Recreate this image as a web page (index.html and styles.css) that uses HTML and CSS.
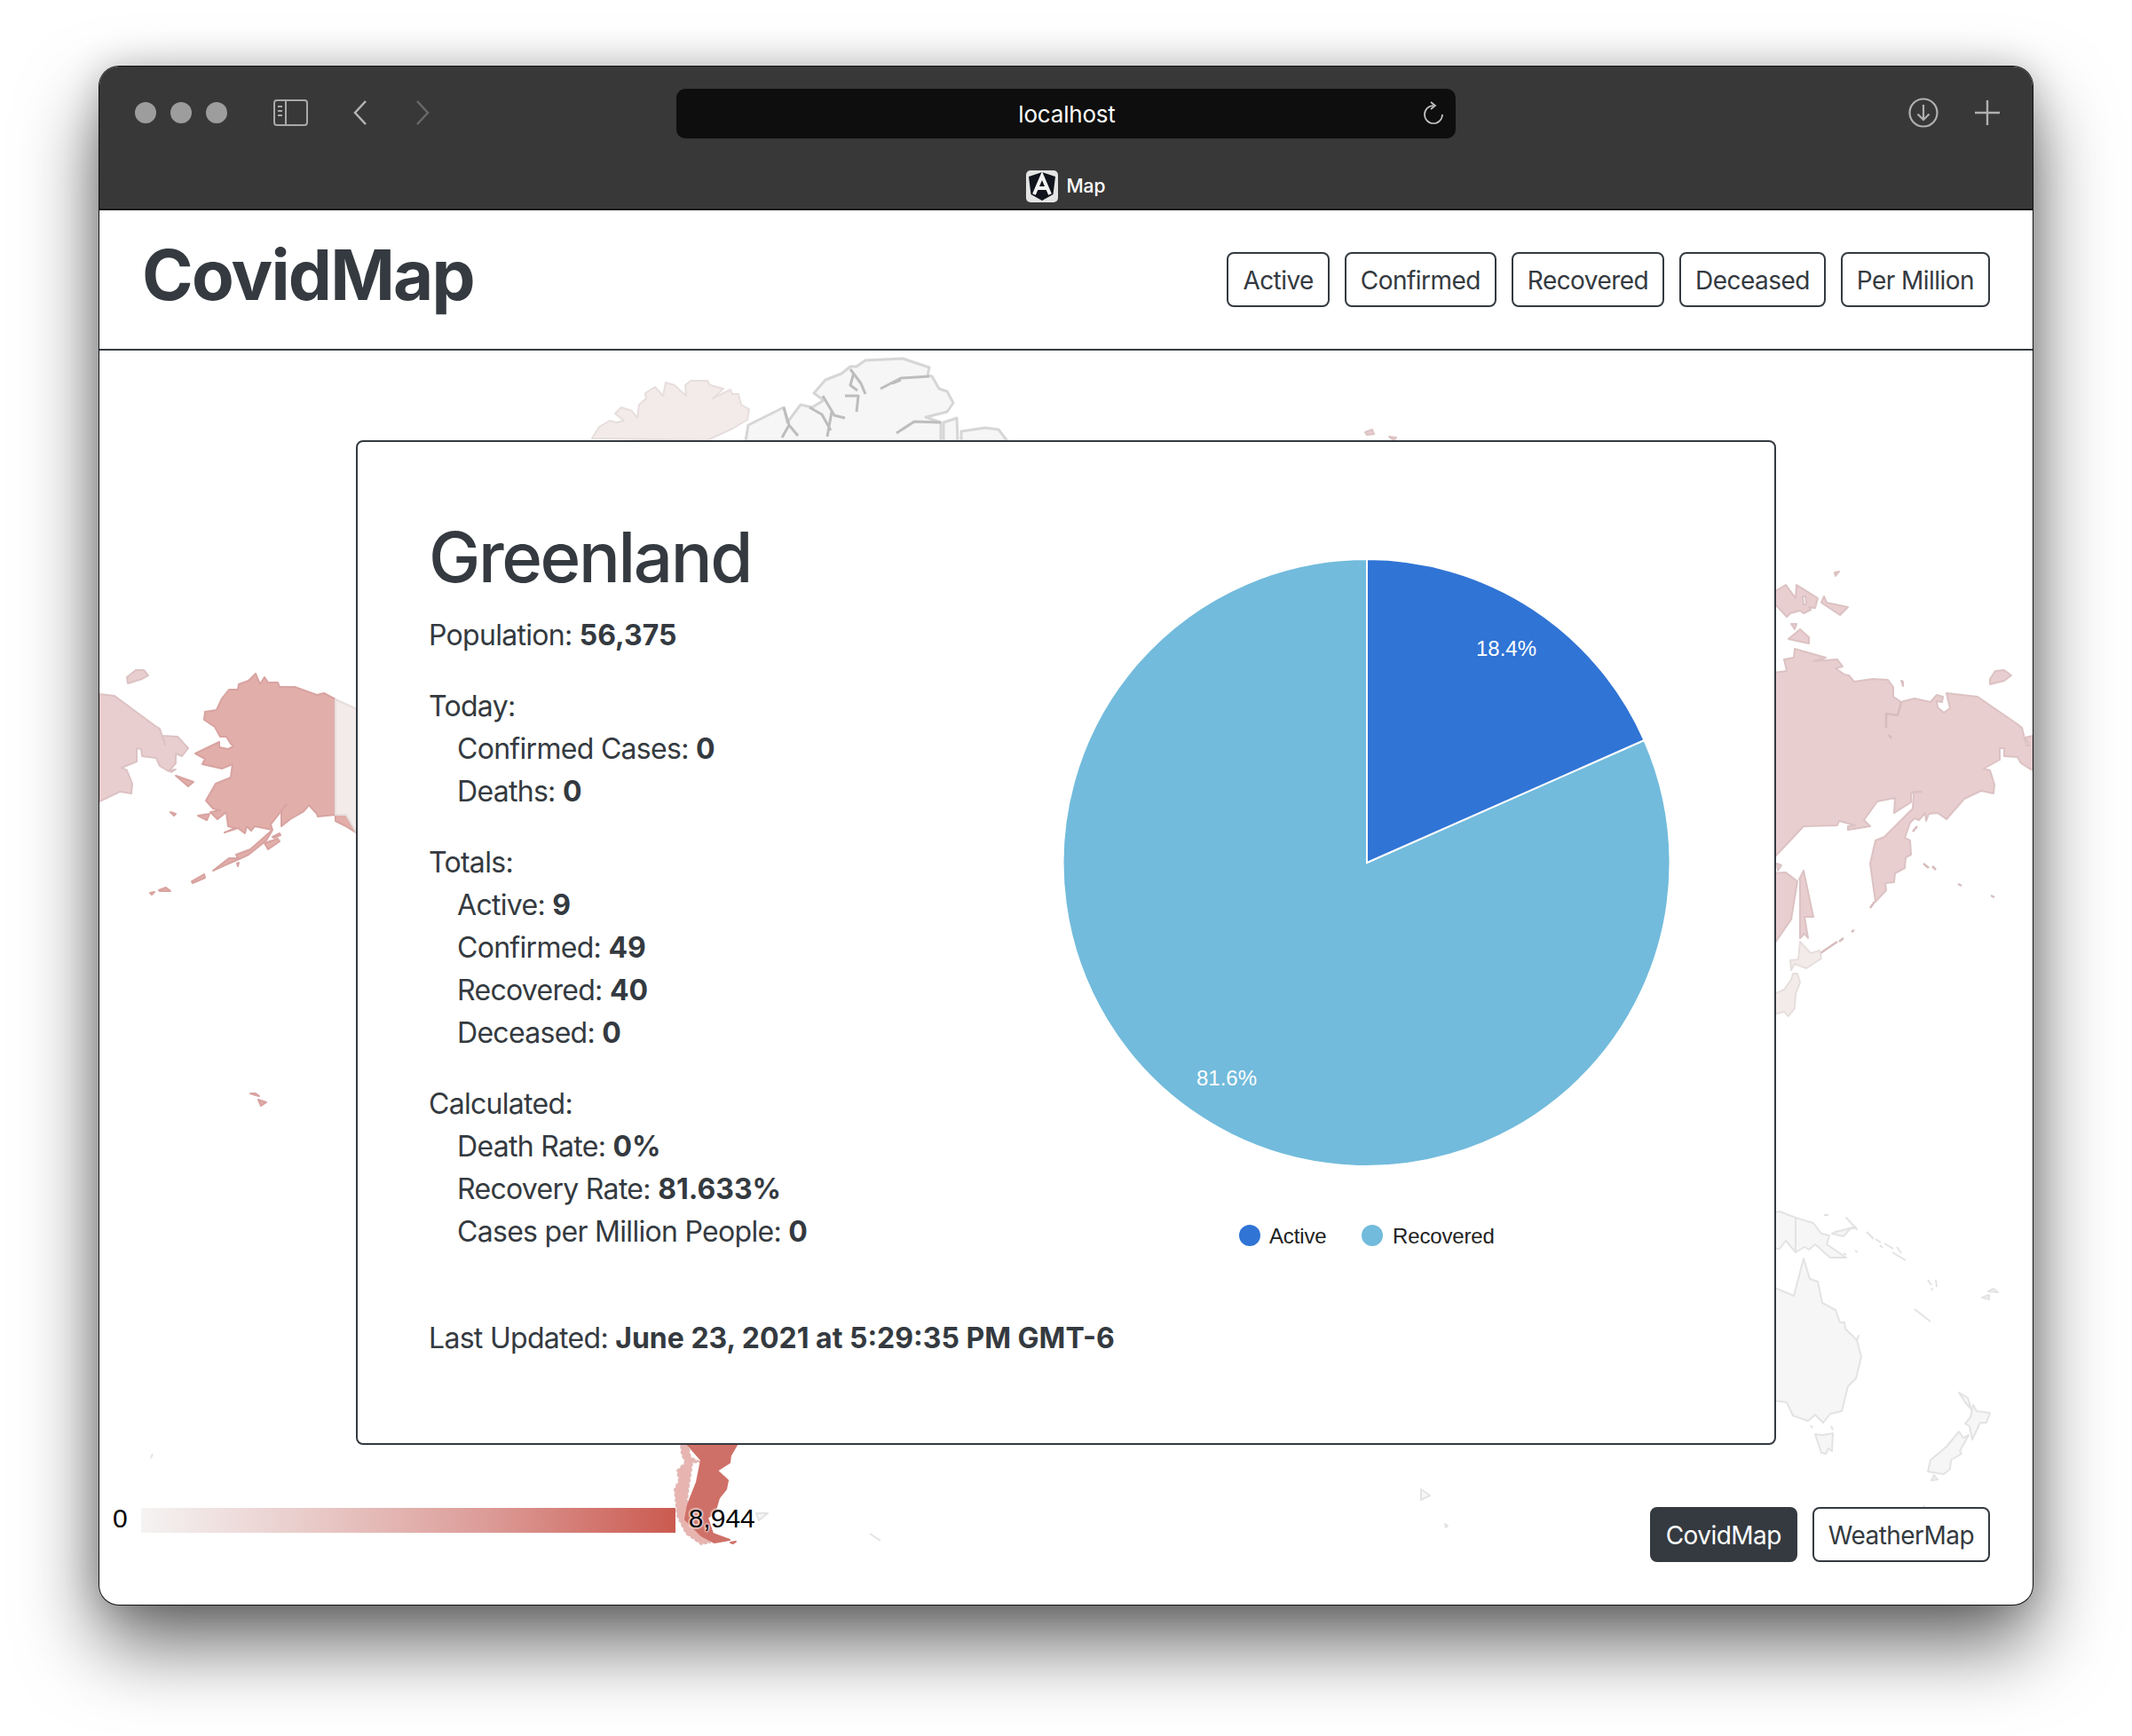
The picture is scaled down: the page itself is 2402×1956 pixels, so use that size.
FILE: index.html
```html
<!DOCTYPE html>
<html>
    <head>
        <title>Map</title>
        <link rel="stylesheet" href="styles.css">
    </head>
    <body>
        <div class="window">
            <div class="toolbar">
                <div class="toolbar-top">
                    <div class="toolbar-left">
                        <span class="light"></span><span class="light"></span><span class="light"></span>
                        <svg class="ico-sidebar" width="39" height="30" viewBox="0 0 39 30">
                            <rect x="1" y="1" width="37" height="28" rx="3" fill="none" stroke="#a9a9a9" stroke-width="2"/>
                            <path d="M14 1v28" stroke="#a9a9a9" stroke-width="2"/>
                            <path d="M5 8h5M5 13h5M5 18h5" stroke="#a9a9a9" stroke-width="2"/>
                        </svg>
                        <svg class="ico-back" width="17" height="30" viewBox="0 0 17 30">
                            <path d="M15 2 3 15l12 13" fill="none" stroke="#b4b4b4" stroke-width="2.5"/>
                        </svg>
                        <svg class="ico-forward" width="17" height="30" viewBox="0 0 17 30">
                            <path d="M2 2l12 13L2 28" fill="none" stroke="#686868" stroke-width="2.5"/>
                        </svg>
                    </div>
                    <div class="urlbar">
                        <span class="url">localhost</span>
                        <svg class="ico-reload" width="24" height="26" viewBox="0 0 24 26">
                            <path d="M12 5A10 10 0 1 0 22 15" fill="none" stroke="#c4c4c4" stroke-width="1.7"/>
                            <path d="M9 1l5 4-5 4" fill="none" stroke="#c4c4c4" stroke-width="1.7"/>
                        </svg>
                    </div>
                    <div class="toolbar-right">
                        <svg width="34" height="34" viewBox="0 0 34 34">
                            <circle cx="17" cy="17" r="15.5" fill="none" stroke="#b0b0b0" stroke-width="2.2"/>
                            <path d="M17 8v17M10.5 18.5 17 25l6.5-6.5" fill="none" stroke="#b0b0b0" stroke-width="2.2"/>
                        </svg>
                        <svg width="28" height="28" viewBox="0 0 28 28">
                            <path d="M14 0v28M0 14h28" stroke="#b0b0b0" stroke-width="2.4"/>
                        </svg>
                    </div>
                </div>
                <div class="tab">
                    <svg width="36" height="36" viewBox="0 0 36 36">
                        <rect width="36" height="36" rx="5" fill="#e4e4e4"/>
                        <path d="M18 2 3 7l2.5 20L18 34l12.5-7L33 7z" fill="#11141d"/>
                        <path d="M9 27 18 6l9 21M12.5 20h11" fill="none" stroke="#f2f2f2" stroke-width="4"/>
                    </svg>
                    <span>Map</span>
                </div>
            </div>

            <div class="header">
                <h1 class="brand">CovidMap</h1>
                <div class="btn-row">
                    <a class="btn">Active</a>
                    <a class="btn">Confirmed</a>
                    <a class="btn">Recovered</a>
                    <a class="btn">Deceased</a>
                    <a class="btn">Per Million</a>
                </div>
            </div>

            <div class="stage">
                <svg class="map" viewBox="112 395 2178 1413">
                    <!-- far east russia, wraps to the left edge -->
                    <g class="ru">
                        <polygon points="112,782 129,784 175,818 180,821 186,839 183,829 200,830 212,843 205,852 198,849 198,860 190,869 180,863 176,854 160,852 159,844 154,843 154,858 137,865 143,868 149,883 148,894 135,892 112,903"/>
                        <polygon points="143,763 153,755 162,755 167,761 160,765 144,770"/>
                        <polygon points="191,868 198,867 193,870"/>
                        <polygon points="1990,759 2013,756 2010,743 2021,741 2022,731 2057,741 2043,745 2070,743 2076,751 2068,753 2078,760 2083,761 2089,768 2110,765 2127,766 2133,774 2133,785 2142,791 2145,790 2157,787 2175,791 2182,783 2189,785 2188,791 2182,790 2183,797 2190,803 2197,798 2193,781 2228,785 2273,816 2278,820 2283,840 2286,840 2282,831 2290,829 2290,868 2277,860 2273,853 2258,852 2258,843 2253,843 2253,856 2235,866 2242,868 2247,884 2246,894 2232,891 2213,900 2193,923 2183,916 2173,917 2170,925 2169,916 2162,924 2157,922 2152,927 2146,944 2152,947 2153,963 2147,966 2146,978 2135,984 2134,994 2124,995 2125,1003 2113,1016 2107,973 2113,947 2123,943 2155,911 2156,892 2165,892 2153,894 2153,904 2134,916 2135,899 2115,903 2100,924 2107,931 2082,935 2082,931 2090,930 2072,925 2070,930 2032,931 2000,965 1990,965"/>
                        <polyline class="thin" points="2142,791 2138,806 2125,804 2125,820"/>
                        <polygon points="2000,666 2012,659 2023,674 2024,659 2048,674 2045,685 2038,684 2040,687 2032,691 2028,688 2017,691 2013,695 2003,684 2000,681"/>
                        <polygon class="hole" points="2031,672 2034,672 2035,681 2032,681"/>
                        <polygon points="2052,679 2055,672 2058,679 2082,684 2073,693"/>
                        <polygon points="2018,703 2024,703 2022,709"/>
                        <polygon points="2015,720 2028,709 2038,718 2038,725"/>
                        <polygon points="2067,645 2072,644 2068,649"/>
                        <polygon points="2242,765 2248,756 2258,755 2266,761 2258,767 2242,771"/>
                        <polygon points="2142,767 2144,768 2144,773"/>
                        <path class="thin" d="M2155 937l5-6M2167 973l6 5M2177 976l4 4M2206 996l4 2M2243 1009l4 2M2107 1023l5-7M2086 1050l3-2M2072 1061l5-4M2048 1076l22-15M2128 828l3 4"/>
                        <polygon points="1990,984 2012,983 2025,993 2018,1036 2000,1062 1990,1062"/>
                        <polygon points="2027,991 2032,981 2043,1033 2033,1033 2037,1057 2033,1052 2028,1057 2028,991"/>
                        <polygon points="2002,973 2007,975 2003,981"/>
                        <polygon points="1538,487 1546,484 1548,489 1540,490"/>
                        <polygon points="1565,492 1573,493 1570,496"/>
                    </g>

                    <!-- alaska -->
                    <g class="ak">
                        <polygon points="378,788 365,781 357,783 332,774 315,774 313,769 302,769 298,763 293,771 288,759 280,767 269,771 268,777 258,777 250,787 244,800 231,802 230,811 242,819 248,830 255,830 260,838 263,841 257,844 247,842 247,836 220,849 231,855 228,861 250,866 262,861 260,876 243,883 232,902 240,911 248,913 237,915 245,923 255,915 257,931 265,933 253,938 268,933 276,939 278,931 283,936 287,931 307,935 282,957 266,963 268,967 258,967 240,981 253,975 267,969 280,963 300,947 307,935 305,929 323,906 317,913 317,931 327,923 341,915 345,911 348,907 357,917 358,920 378,918 390,918 401,938 388,930 378,925"/>
                        <polygon points="298,950 313,945 315,948 302,957"/>
                        <polygon points="307,943 315,939 316,941 309,944"/>
                        <polygon points="198,874 218,881 212,886"/>
                        <polygon points="223,919 236,917 233,924"/>
                        <polygon points="192,915 198,917 196,919"/>
                        <polygon points="216,993 230,985 231,989 217,995"/>
                        <polygon points="179,1003 187,1000 192,1004 180,1004"/>
                        <polygon points="169,1006 174,1005 171,1008"/>
                        <polygon points="267,973 269,972 268,976"/>
                        <polygon points="282,1232 288,1232 292,1235 288,1234"/>
                        <polygon points="291,1239 300,1242 294,1246"/>
                    </g>

                    <!-- pale countries -->
                    <g class="pale">
                        <polygon points="378,788 402,799 402,939 390,918 378,918"/>
                        <polygon points="667,494 675,481 687,474 695,476 703,474 693,466 700,459 712,463 718,471 720,456 728,449 727,443 738,436 747,446 750,431 760,434 773,446 772,434 778,429 797,429 800,434 815,438 803,449 823,439 825,444 832,444 835,456 844,461 842,473 825,483 797,496"/>
                        <polygon points="2028,1061 2040,1074 2050,1071 2052,1080 2035,1091 2022,1086 2018,1093 2017,1082 2026,1081"/>
                        <polygon points="2020,1097 2025,1097 2028,1107 2023,1120 2022,1136 2015,1145 2010,1140 1990,1145 1990,1124 2010,1115 2018,1104"/>
                    </g>

                    <!-- no data -->
                    <g class="nodata">
                        <polygon class="arctic" points="840,497 843,479 883,459 887,476 902,456 915,459 928,451 917,443 930,428 948,421 958,413 965,413 975,406 1017,404 1047,414 1045,423 1050,424 1058,438 1067,441 1074,454 1067,464 1043,470 1060,476 1060,497"/>
                        <path class="dark" d="M883 459l6 20 10 12M889 479l-8 14M912 459l14 8 10 18M937 464l-5 28M927 446l13 22 12 3M952 446h15l-2 18M958 416l12 16 5 12M962 420l-4 14 8 6M992 438l23-12 32-2M1010 488l20-13 30 1M1005 432l10-4"/>
                        <polygon class="arctic" points="1063,476 1078,471 1079,497 1063,497"/>
                        <polygon class="arctic" points="1083,486 1110,482 1125,484 1135,497 1083,497"/>
                        <polygon points="1990,1368 2005,1365 2023,1372 2043,1378 2052,1390 2061,1392 2058,1402 2080,1417 2062,1417 2045,1402 2038,1408 2033,1405 2023,1411 2012,1398 2005,1407 1990,1407"/>
                        <path d="M2023 1372v39"/>
                        <polygon points="2064,1390 2077,1393 2085,1384 2091,1384 2080,1372 2092,1385 2090,1382 2077,1386 2068,1388"/>
                        <path d="M2103 1388l8 8M2113 1396l6 4M2118 1403l3 3M2123 1401l10 6M2132 1411l15 9M2137 1405l5 7M2055 1369h5M2077 1412l3 2M2090 1409l3 2M2172 1442l4 6M2181 1442l1 8M2176 1451l1 3M2157 1475l18 14M2040 1606l2 3M2063 1607l2 4"/>
                        <polygon points="2240,1455 2246,1452 2251,1456"/>
                        <polygon points="2233,1462 2241,1459 2241,1464"/>
                        <polygon points="1990,1447 2021,1460 2032,1418 2039,1441 2048,1444 2053,1468 2068,1476 2073,1490 2078,1490 2079,1497 2092,1510 2094,1505 2092,1510 2097,1529 2091,1553 2082,1562 2075,1590 2062,1593 2054,1603 2045,1594 2037,1601 2020,1595 2013,1580 1990,1577"/>
                        <polygon points="2045,1616 2053,1617 2065,1615 2064,1635 2060,1632 2057,1638 2052,1637"/>
                        <polygon points="2207,1569 2217,1575 2221,1588 2214,1580"/>
                        <polygon points="2223,1583 2227,1590 2242,1592 2238,1603 2231,1603 2222,1622 2219,1607 2214,1604 2220,1597"/>
                        <polygon points="2207,1613 2212,1620 2218,1617 2208,1635 2210,1638 2198,1645 2197,1655 2190,1661 2172,1658 2175,1645 2193,1630"/>
                        <polygon points="2179,1662 2183,1667 2176,1668"/>
                        <polygon points="1601,1678 1611,1685 1601,1690"/>
                        <polygon points="1628,1717 1631,1719 1629,1721"/>
                        <polygon points="852,1705 865,1705 855,1713"/>
                        <path d="M980 1728l12 8M172 1638l-2 5M2168 1696l-1 3"/>
                    </g>

                    <!-- south america tip -->
                    <polygon class="chile" points="767,1628 775,1628 778,1642 788,1647 780,1648 775,1682 773,1702 800,1738 790,1740 773,1728 763,1708 760,1678 765,1668 763,1657 772,1648 768,1638"/>
                    <polygon class="argentina" points="775,1628 830,1628 823,1640 822,1648 808,1657 820,1668 818,1678 810,1688 805,1705 797,1710 803,1728 822,1735 805,1738 790,1730 772,1712 775,1695 785,1670 790,1645"/>
                    <polygon class="argentina" points="823,1738 829,1737 826,1739"/>
                </svg>

                <div class="card">
                    <div class="stats">
                        <h1 class="country">Greenland</h1>
                        <p class="group">Population: <strong>56,375</strong></p>
                        <div class="group">
                            <p>Today:</p>
                            <p class="item">Confirmed Cases: <strong>0</strong></p>
                            <p class="item">Deaths: <strong>0</strong></p>
                        </div>
                        <div class="group">
                            <p>Totals:</p>
                            <p class="item">Active: <strong>9</strong></p>
                            <p class="item">Confirmed: <strong>49</strong></p>
                            <p class="item">Recovered: <strong>40</strong></p>
                            <p class="item">Deceased: <strong>0</strong></p>
                        </div>
                        <div class="group">
                            <p>Calculated:</p>
                            <p class="item">Death Rate: <strong>0%</strong></p>
                            <p class="item">Recovery Rate: <strong>81.633%</strong></p>
                            <p class="item">Cases per Million People: <strong>0</strong></p>
                        </div>
                        <p class="updated">Last Updated: <strong>June 23, 2021 at 5:29:35 PM GMT-6</strong></p>
                    </div>
                    <svg class="chart" width="760" height="840" viewBox="0 0 760 840">
                        <path class="slice-recovered" d="M380 372 692.5 234A342 342 0 1 1 380 30z"/>
                        <path class="slice-active" d="M380 372V30A342 342 0 0 1 692.5 234z"/>
                        <text class="pct" x="537" y="139">18.4%</text>
                        <text class="pct" x="222" y="623">81.6%</text>
                        <circle cx="248" cy="792" r="12" fill="#3074d5"/>
                        <text class="key" x="270" y="801">Active</text>
                        <circle cx="386" cy="792" r="12" fill="#72bbdc"/>
                        <text class="key" x="409" y="801">Recovered</text>
                    </svg>
                </div>

                <div class="footer">
                    <div class="scale">
                        <span>0</span>
                        <div class="scale-bar"></div>
                        <span>8,944</span>
                    </div>
                    <div class="btn-row">
                        <a class="btn btn-on">CovidMap</a>
                        <a class="btn">WeatherMap</a>
                    </div>
                </div>
            </div>
        </div>
    </body>
</html>
```

FILE: styles.css
```css
* {
    box-sizing: border-box;
}
body {
    margin: 0;
    width: 2402px;
    height: 1956px;
    background: #fff;
    color: #343a40;
    font: 32px/48px "Inter", "Liberation Sans", sans-serif;
    padding: 75px 112px 0;
    overflow: hidden;
}
.window {
    width: 2178px;
    height: 1733px;
    border-radius: 22px;
    overflow: hidden;
    display: flex;
    flex-direction: column;
    background: #fff;
    box-shadow: 0 0 0 1px #111, 0 44px 88px rgba(0,0,0,0.6), 0 0 40px rgba(0,0,0,0.2);
}

/* browser chrome */
.toolbar {
    height: 162px;
    flex: none;
    background: #383838;
    border-bottom: 2px solid #151515;
    color: #fff;
}
.toolbar-top {
    height: 104px;
    display: grid;
    grid-template-columns: 1fr 878px 1fr;
    align-items: center;
}
.toolbar-left {
    display: flex;
    align-items: center;
    padding-left: 40px;
}
.light {
    width: 24px;
    height: 24px;
    border-radius: 50%;
    background: #9d9d9d;
    margin-right: 16px;
}
.ico-sidebar {
    margin-left: 36px;
}
.ico-back {
    margin-left: 50px;
}
.ico-forward {
    margin-left: 54px;
}
.urlbar {
    height: 56px;
    border-radius: 10px;
    background: #0e0e0e;
    display: flex;
    align-items: center;
    justify-content: center;
    position: relative;
    margin-top: 2px;
}
.url {
    font-size: 26px;
    line-height: 56px;
    letter-spacing: -0.2px;
    padding-left: 2px;
    padding-top: 2px;
}
.ico-reload {
    position: absolute;
    right: 13px;
    top: 14px;
}
.toolbar-right {
    display: flex;
    align-items: center;
    justify-content: flex-end;
    gap: 41px;
    padding-right: 37px;
}
.tab {
    display: flex;
    align-items: center;
    justify-content: center;
    gap: 9px;
    height: 56px;
    margin-top: 3px;
    font-size: 21px;
    font-weight: 500;
}

/* page header */
.header {
    position: relative;
    height: 158px;
    flex: none;
    display: flex;
    justify-content: space-between;
    align-items: center;
    padding: 0 48px;
    border-bottom: 2px solid #343a40;
    background: #fff;
}
.brand {
    margin: 0 0 10px;
    font-size: 78px;
    line-height: 96px;
    font-weight: 700;
    letter-spacing: -1.8px;
}
.btn-row {
    display: flex;
    gap: 17px;
}
.btn {
    height: 62px;
    padding: 0 16px;
    border: 2px solid #343a40;
    border-radius: 8px;
    font-size: 28px;
    line-height: 60px;
    letter-spacing: -0.55px;
    color: #343a40;
    background: #fff;
}
.btn-on {
    background: #343a40;
    color: #fff;
}

/* map + overlays */
.stage {
    flex: 1;
    position: relative;
    padding-top: 101px;
}
.map {
    position: absolute;
    left: 0;
    top: 0;
    width: 100%;
    height: 100%;
}
.map polygon, .map path, .map polyline {
    stroke-width: 2;
    stroke-linejoin: round;
}
.map path, .map polyline {
    fill: none;
}
.ru {
    fill: #e9cecf;
    stroke: #dcc2c3;
}
.ru .thin {
    stroke: #d8bcbd;
    stroke-width: 2.5;
}
.ru .hole {
    fill: #fff;
}
.ak {
    fill: #e1aeaa;
    stroke: #d8a3a0;
}
.pale {
    fill: #f3ebea;
    stroke: #e6dedd;
}
.nodata {
    fill: #f6f6f6;
    stroke: #e3e3e3;
}
.map .arctic {
    stroke: #d6d6d6;
    stroke-width: 3;
}
.map .dark {
    stroke: #bdbdbd;
    stroke-width: 3;
}
.chile {
    fill: #e8b4b0;
    stroke: #e0b8b5;
    stroke-width: 3;
    stroke-dasharray: 4 2;
}
.argentina {
    fill: #cf7068;
    stroke: #cf7068;
}
.card {
    position: relative;
    width: 1600px;
    height: 1132px;
    margin-left: 289px;
    background: #fff;
    border: 2px solid #343a40;
    border-radius: 8px;
    display: flex;
    align-items: flex-start;
    padding-left: 80px;
}
.stats {
    width: 677px;
    flex: none;
    padding-top: 82px;
    white-space: nowrap;
    letter-spacing: -0.7px;
}
.country {
    margin: 0 0 16px;
    font-size: 78px;
    line-height: 96px;
    font-weight: 500;
    letter-spacing: -2.4px;
}
p {
    margin: 0;
}
.group {
    margin: 0 0 32px;
}
.item {
    padding-left: 32px;
}
strong {
    font-weight: 700;
    letter-spacing: 0;
}
.updated {
    margin-top: 72px;
}
.chart {
    flex: none;
    margin-top: 102px;
}
.slice-active {
    fill: #3074d5;
    stroke: #fff;
    stroke-width: 2;
}
.slice-recovered {
    fill: #72bbdc;
    stroke: #fff;
    stroke-width: 2;
}
.pct {
    fill: #fff;
    text-anchor: middle;
    font: 24px "Liberation Sans", sans-serif;
}
.key {
    fill: #222;
    font: 24px "Liberation Sans", sans-serif;
    letter-spacing: -0.15px;
}
.footer {
    position: relative;
    display: flex;
    justify-content: space-between;
    align-items: flex-start;
    margin-top: 70px;
    padding: 0 48px 0 15px;
}
.scale {
    display: flex;
    align-items: center;
    gap: 15px;
    font: 30px/26px "Liberation Sans", sans-serif;
    color: #000;
    text-shadow: 0 0 3px #fff, 0 0 3px #fff, 0 0 3px #fff;
}
.scale span {
    margin-bottom: 3px;
}
.scale-bar {
    width: 602px;
    height: 28px;
    background: linear-gradient(to right, #f5f3f3, #e9cdcb 30%, #dc9b97 65%, #cb5a50);
}
```
